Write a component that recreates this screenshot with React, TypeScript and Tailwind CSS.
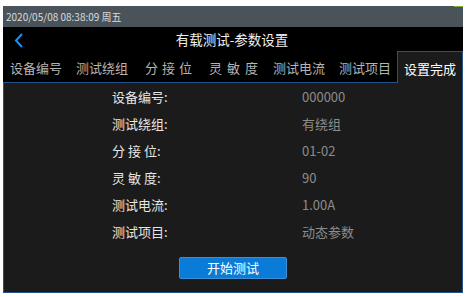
const FONT = '"Noto Sans CJK SC", "Noto Sans", sans-serif';

const tabs = [
  { chars: ["设备编号"], w: "w-[66px]", gap: "" },
  { chars: ["测试绕组"], w: "w-[69px]", gap: "" },
  { chars: ["分", "接", "位"], w: "w-[64px]", gap: "gap-[4px]" },
  { chars: ["灵", "敏", "度"], w: "w-[64px]", gap: "gap-[5px]" },
  { chars: ["测试电流"], w: "w-[66px]", gap: "" },
  { chars: ["测试项目"], w: "w-[55px]", gap: "" },
];

const rows = [
  { label: ["设备编号:"], value: "000000" },
  { label: ["测试绕组:"], value: "有绕组" },
  { label: ["分", "接", "位:"], value: "01-02" },
  { label: ["灵", "敏", "度:"], value: "90" },
  { label: ["测试电流:"], value: "1.00A" },
  { label: ["测试项目:"], value: "动态参数" },
];

export default function App() {
  return (
    <div
      className="flex h-[297px] w-[465px] flex-col bg-white pb-[4px] pl-[3px] pr-[2px] pt-[6px]"
      style={{ fontFamily: FONT }}
    >
      {/* Status bar */}
      <div className="relative flex h-[21px] items-center bg-[#4b535a] pl-[3px] text-[10px] text-[#dcdcdc]">
        2020/05/08 08:38:09 周五
        <div className="absolute right-0 top-0 h-px w-[9px] bg-[#7fb241]" />
      </div>

      {/* Title */}
      <div className="relative flex h-[24px] items-center justify-center bg-black text-[13.5px] text-[#f0f0f0]">
        <svg
          className="absolute left-[10px] top-[6px]"
          width="12"
          height="15"
          viewBox="0 0 12 15"
          fill="none"
        >
          <path d="M9 1 L3 7.5 L9 14" stroke="#1e8ef0" strokeWidth="2" />
        </svg>
        <span className="-translate-x-[1px]">有载测试-参数设置</span>
      </div>

      {/* Tabs */}
      <div className="flex h-[32px] bg-black">
        <div className="flex flex-1 items-center border-b border-[#24528a] pl-[7px] pt-[3px] text-[13px] text-[#b4b4b4]">
          {tabs.map((t, i) => (
            <div key={i} className={`flex ${t.w} ${t.gap}`}>
              {t.chars.map((c) => (
                <span key={c}>{c}</span>
              ))}
            </div>
          ))}
        </div>
        <div className="flex w-[66px] items-center justify-center border-x border-t border-[#24528a] bg-[#1b1b1b] pt-[3px] text-[13px] text-white">
          设置完成
        </div>
      </div>

      {/* Panel */}
      <div className="flex flex-1 flex-col border-x border-b border-[#24528a] bg-[#1b1b1b]">
        <div className="grid grid-cols-[190px_auto] pl-[108px] text-[13px]">
          {rows.map((r) => (
            <div key={r.value} className="contents">
              <div className="flex h-[27px] items-center gap-[3px] text-[#e6e6e6]">
                {r.label.map((c) => (
                  <span key={c}>{c}</span>
                ))}
              </div>
              <div className="flex h-[27px] items-center text-[#8c8c8c]">{r.value}</div>
            </div>
          ))}
        </div>
        <div className="mt-[12px] flex justify-center">
          <button className="h-[22px] w-[108px] rounded-[2px] border border-[#3d8fd6] bg-[#0a7bd6] text-[13px] text-white">
            开始测试
          </button>
        </div>
      </div>
    </div>
  );
}
